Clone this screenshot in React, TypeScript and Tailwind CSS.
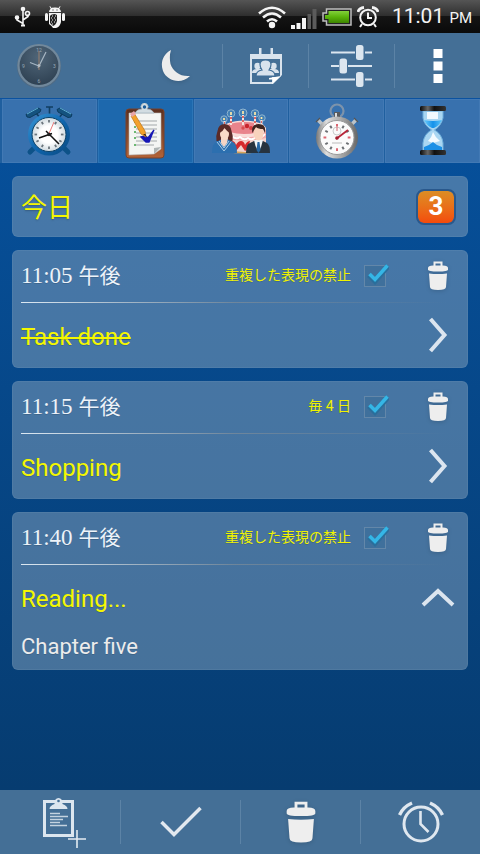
import type { ReactNode } from "react";

function UsbIcon() {
  return (
    <svg width="18" height="22" viewBox="0 0 18 22" fill="none" stroke="#f4f4f4" strokeWidth="1.6">
      <path d="M9 19V3M9 17.500L3 14V11.500M9 14l5-3.500V8.500" />
      <circle cx="9" cy="3" r="1.500" fill="#f4f4f4" />
      <circle cx="3" cy="11.500" r="1.500" fill="#f4f4f4" />
      <circle cx="13.500" cy="7.500" r="2" />
      <path d="M7 19.500h4" strokeWidth="2" />
    </svg>
  );
}

function RobotIcon() {
  return (
    <svg width="22" height="24" viewBox="0 0 22 24">
      <g fill="#f4f4f4">
        <path d="M6 1l1.500 2C9 2.300 13 2.300 14.500 3L16 1l.5.500-1.200 2.200Q17 5 17 7H5q0-2 1.700-3.300L5.500 1.500z" />
        <rect x="1" y="8" width="3" height="8" rx="1.500" />
        <rect x="18" y="8" width="3" height="8" rx="1.500" />
        <path d="M5 8h12v9q-1 5-5 6H9q-1-2-4-4z" />
      </g>
      <path d="M8.500 5h1M12.500 5h1" stroke="#222" />
      <path d="M6 11q1-2 5-2l2 1v6q-1 4-4 5l-3-3z" fill="#222" />
      <path d="M8 11h1M11 11h1M7 13h1M10 13h1M8 15h1M11 15h1M7 17h1M10 17h1M8 19h1" stroke="#eee" />
    </svg>
  );
}

function WifiIcon() {
  return (
    <svg width="28" height="24" viewBox="0 0 28 24" fill="none" stroke="#f4f4f4" strokeWidth="2.600">
      <path d="M1 8.500Q14-3 27 8.500M5 12.500q9-8 18 0M9 16.500q5-4.500 10 0" />
      <circle cx="14" cy="20" r="3.200" fill="#f4f4f4" stroke="none" />
    </svg>
  );
}

function SignalIcon() {
  return (
    <svg width="26" height="24" viewBox="0 0 26 24">
      <path d="M0 20h4v4H0zM5.500 18h4v6h-4zM11 13h4v11h-4z" fill="#f4f4f4" />
      <path d="M16.500 9h3.500v15h-3.500zM21.500 4h4v20h-4z" fill="#5b5b5b" />
    </svg>
  );
}

function BatteryIcon() {
  return (
    <svg width="30" height="18" viewBox="0 0 30 18">
      <defs>
        <linearGradient id="charge" x1="0" y1="0" x2="0" y2="1">
          <stop offset="0" stopColor="#83d13b" />
          <stop offset=".5" stopColor="#59b30a" />
          <stop offset="1" stopColor="#3d8500" />
        </linearGradient>
      </defs>
      <path d="M4.500 1h24.500v16H4.500v-4H1V5h3.500z" fill="#222" stroke="#bdbdbd" strokeWidth="1.500" />
      <path d="M6.500 3H27v12H6.500v-4H3V7h3.500z" fill="url(#charge)" />
    </svg>
  );
}

function StatusAlarmIcon() {
  return (
    <svg width="22" height="22" viewBox="0 0 22 22" fill="none" stroke="#f4f4f4" strokeWidth="2">
      <circle cx="11" cy="11.500" r="7.800" />
      <path d="M1 6q1-4 6-4.500M21 6q-1-4-6-4.500" strokeWidth="2.800" />
      <path d="M11 6.500V12h4M5 18l-2 3M17 18l2 3" />
    </svg>
  );
}

function DarkClockIcon() {
  return (
    <svg width="46" height="48" viewBox="0 0 46 48">
      <defs>
        <radialGradient id="darkface" cx=".5" cy=".3" r=".8">
          <stop offset="0" stopColor="#506679" />
          <stop offset="1" stopColor="#293b4c" />
        </radialGradient>
      </defs>
      <circle cx="23" cy="24.500" r="22" fill="#56697a" opacity=".6" />
      <circle cx="23" cy="23.500" r="20.500" fill="url(#darkface)" stroke="#71889b" strokeWidth="2.200" />
      <g fill="#9aabba" fontSize="5" textAnchor="middle" className="font-['Roboto',sans-serif]">
        <text x="23" y="10">12</text>
        <text x="38.500" y="25.500">3</text>
        <text x="23" y="41">6</text>
        <text x="7.500" y="25.500">9</text>
      </g>
      <path d="M23 24L14 20.500M22 26l8-16" stroke="#a7b6c3" strokeWidth="1.200" />
      <path d="M23 28V9" stroke="#9a806e" />
      <circle cx="23" cy="23.500" r="1.500" fill="#b4bcc2" />
    </svg>
  );
}

function MoonIcon() {
  return (
    <svg width="36" height="34" viewBox="0 0 36 34" className="drop-shadow-sm">
      <path d="M10 1C2 5-1 14 2 22c4 10 18 14 27 5C19 28 12 22 9.500 15Q8 7 10 1z" fill="#ececec" />
    </svg>
  );
}

function EventsIcon() {
  return (
    <svg width="32" height="38" viewBox="0 0 32 38">
      <g fill="#d9e3ed">
        <path d="M9 1h2.500v7H9zM20.500 1H23v7h-2.500z" />
        <path fillRule="evenodd" d="M0 7h32v21l-9 9H0zM2 12v23h20v-5h8V12z" />
        <circle cx="7.500" cy="19" r="3.200" />
        <circle cx="23.500" cy="19" r="3.200" />
        <path d="M2 26q0-4 5-4h17q5 0 5 4z" />
      </g>
      <path d="M6 29q0-5 6-6-2-3-2-5.500Q10 13 15.500 13t5.500 4.500q0 2.500-2 5.500 6 1 6 6z" fill="#d9e3ed" stroke="#416f98" strokeWidth="1.200" />
      <path d="M19 31l12-2-9 8 1-4.500h-4z" fill="#fff" />
    </svg>
  );
}

function SlidersIcon() {
  return (
    <svg width="42" height="42" viewBox="0 0 42 42">
      <path d="M0 7.500h24M34 7.500h7M0 21h8M17 21h24M0 34.500h24M34 34.500h7" stroke="#dce6ef" strokeWidth="2" />
      <g fill="#dce6ef">
        <rect x="25" y="0" width="7.500" height="15" rx="2.500" />
        <rect x="8.500" y="13.500" width="7.500" height="15" rx="2.500" />
        <rect x="25" y="27" width="7.500" height="15" rx="2.500" />
      </g>
    </svg>
  );
}

function OverflowIcon() {
  return (
    <svg width="10" height="34" viewBox="0 0 10 34" fill="#fff">
      <path d="M.5 0h9v9h-9zM.5 12.500h9v9h-9zM.5 25h9v9h-9z" />
    </svg>
  );
}

const hours = [0, 30, 60, 90, 120, 150, 180, 210, 240, 270, 300, 330];

function AlarmTabIcon() {
  return (
    <svg width="48" height="54" viewBox="0 0 48 54">
      <defs>
        <linearGradient id="bluerim" x1="0" y1="0" x2="1" y2="1">
          <stop offset="0" stopColor="#3a97d6" />
          <stop offset=".5" stopColor="#0f66ae" />
          <stop offset="1" stopColor="#0a4a82" />
        </linearGradient>
        <radialGradient id="whiteface">
          <stop offset=".5" stopColor="#fff" />
          <stop offset="1" stopColor="#cfd9df" />
        </radialGradient>
      </defs>
      <path d="M21 3h7M24.500 3v7M11 9l5 6M38 9l-5 6" stroke="#103e62" strokeWidth="1.600" />
      <path d="M2 13L1 10.500 13 4l3 1.500-1 2.500-10 5.500z" fill="#14527f" stroke="#0c3c5f" />
      <path d="M46 13l1-2.500L35 4l-3 1.500 1 2.500 10 5.500z" fill="#14527f" stroke="#0c3c5f" />
      <path d="M2 10l11-6M46 10L35 4" stroke="#5fb0d6" />
      <path d="M10 43l-5 5M38 43l5 5" stroke="#0d5288" strokeWidth="5" strokeLinecap="round" />
      <circle cx="24" cy="30.500" r="21" fill="url(#bluerim)" />
      <circle cx="24" cy="30.500" r="17" fill="url(#whiteface)" stroke="#0a4167" />
      {hours.map((angle) => (
        <path key={angle} d="M24 16v2.600" stroke="#6b757c" strokeWidth="1.800" transform={`rotate(${angle} 24 30.500)`} />
      ))}
      <path d="M23 32l6-14" stroke="#e87979" />
      <path d="M14 34l13-4.500M21 27l13 13" stroke="#111" strokeWidth="1.500" />
      <circle cx="24" cy="30.500" r="1.800" fill="#222" />
    </svg>
  );
}

function TasksTabIcon() {
  return (
    <svg width="40" height="56" viewBox="0 0 40 56">
      <defs>
        <linearGradient id="board" x1="0" y1="0" x2="0" y2="1">
          <stop offset="0" stopColor="#5b3020" />
          <stop offset="1" stopColor="#b26337" />
        </linearGradient>
      </defs>
      <rect x="1" y="6" width="38" height="49" rx="3" fill="url(#board)" stroke="#79412b" />
      <path d="M4 10h32v36l-7 5-25 1z" fill="#f4f5f3" stroke="#bbb" strokeWidth=".6" />
      <path d="M36 44l-7 7v-6z" fill="#aeb4b4" />
      <path d="M11 18h21M11 22h21M11 26h21M11 30h21M11 34h21M11 38h21M11 42h18" stroke="#a3a8aa" />
      <path d="M10 18v2M10 23v2M10 28v2M10 34v2M10 41v2" stroke="#6bb872" strokeWidth="2" />
      <path d="M10 10q2-4 7-4a3.500 3.500 0 1 1 5 0q5 0 7 4z" fill="#d3dde2" stroke="#9fb0bb" strokeWidth=".7" />
      <circle cx="19.500" cy="4" r="1.700" fill="#1c5c98" />
      <path d="M16 34l4-1 3 2 6-8-1 2-4 10-3 0z" fill="#1717b5" stroke="#1717b5" strokeWidth="1.300" />
      <path d="M6 13l3-3 11 18 1 6-5-3z" fill="#f3a12b" stroke="#c47b1f" strokeWidth=".8" />
      <path d="M5 11l4-3 2 3-4 3z" fill="#e8a5a9" />
      <path d="M18 31l3.500 3-1-3z" fill="#3b2a18" />
    </svg>
  );
}

function BirthdayTabIcon() {
  return (
    <svg width="58" height="46" viewBox="0 0 58 46">
      <ellipse cx="31" cy="41" rx="21" ry="4.500" fill="#d7a458" />
      <path d="M11 20v21q21 6 43 0V20z" fill="#f3d3cd" />
      <path d="M11 21v9q21 5 43 0v-9z" fill="#f2a9ab" />
      <ellipse cx="32" cy="21" rx="22" ry="8.500" fill="#f9dcd9" />
      <ellipse cx="32" cy="20" rx="19" ry="6" fill="#e9848c" />
      <path d="M12 27q4 4 8 1 4 4 8 1 4 4 8 1 4 3 8-1 5 2 9-3" fill="none" stroke="#fff" strokeWidth="1.800" />
      <path d="M20 33q3 0 4 4 2-4 5-4t4 4q2-4 5-4-2 9-5 10l-4-6-5 6q-3-2-4-10z" fill="#d5292c" />
      <circle cx="35" cy="18" r="2.200" fill="#c9252d" />
      <circle cx="39" cy="20" r="2" fill="#d83b3f" />
      <circle cx="31" cy="20" r="1.700" fill="#da4c50" />
      <g fill="#4380b4" stroke="#90b5d0" strokeWidth="1">
        <circle cx="12" cy="11" r="3.200" />
        <circle cx="19" cy="5.500" r="3.800" />
        <circle cx="31" cy="5" r="4" />
        <circle cx="43" cy="5.500" r="3.800" />
        <circle cx="50" cy="10" r="3.200" />
      </g>
      <path d="M12.500 13v6M19 8v9M31 7v10M43 8v9M49.500 12v6" stroke="#f3e4df" strokeWidth="2" />
      <path d="M12 15h1M18 10h2M18 14h2M30 9h2M30 13h2M42 10h2M42 14h2M49 14h1" stroke="#d33d3d" strokeWidth="1.500" />
      <path d="M12 10v2M19 4v3M31 3v3M43 4v3M49.500 9v2" stroke="#ffe9a8" strokeWidth="1.700" />
      <path d="M4.500 33q-1-5 1-10 1-7 7-7t7 7q2 5 1 10z" fill="#5b2b28" />
      <path d="M0 45q0-9 4-11l6-3h5l6 3q4 2 4 11z" fill="#2c6faf" />
      <path d="M9 30h7l-1 5-3 4-3-4z" fill="#f5d5c5" />
      <path d="M5 34l7 9 7-9M7 33l5 7 5-7" fill="none" stroke="#a9cbe6" />
      <ellipse cx="12.500" cy="26" rx="4.500" ry="6" fill="#f9dac9" />
      <path d="M7.500 25q3-1 5-5 2 3 5.500 5 0-7-5.500-7t-5 7z" fill="#5b2b28" />
      <path d="M34 45q0-9 4-10l6-3h5l6 3q3 2 3 10z" fill="#27333f" />
      <path d="M42 32h9l-2 7-2.500 5-3-6z" fill="#eef3f6" />
      <path d="M45.500 34h2l1 8-2 3-2-3z" fill="#2466a5" />
      <ellipse cx="46.500" cy="25.500" rx="5" ry="7" fill="#f8d3bd" />
      <path d="M40.500 25q-2-8 6-9 8 0 6.500 9l-2-4q-5 0-7-2l-2 3z" fill="#3d241f" />
    </svg>
  );
}

function StopwatchTabIcon() {
  return (
    <svg width="44" height="56" viewBox="0 0 44 56">
      <defs>
        <linearGradient id="steel">
          <stop offset="0" stopColor="#777" />
          <stop offset=".25" stopColor="#ddd" />
          <stop offset=".7" stopColor="#999" />
          <stop offset="1" stopColor="#666" />
        </linearGradient>
      </defs>
      <circle cx="22" cy="8" r="6.500" fill="none" stroke="#7d93ab" strokeWidth="2.200" />
      <path d="M19 9h6v8h-6z" fill="#595b5e" />
      <path d="M20 10h2v7h-2z" fill="#ddd" />
      <path d="M3 17l6 6M41 17l-6 6" stroke="#bcc3c9" strokeWidth="3.500" />
      <path d="M1 19l4-4M39 15l4 4" stroke="#555" strokeWidth="1.200" />
      <circle cx="22" cy="34.500" r="21" fill="url(#steel)" />
      <circle cx="22" cy="34.500" r="17" fill="#fbfbfb" stroke="#999" />
      {hours.map((angle) => (
        <path key={angle} d="M22 21v2.800" stroke={angle % 90 === 0 ? "#dc6571" : "#6b6e72"} strokeWidth="2" transform={`rotate(${angle} 22 34.500)`} />
      ))}
      <circle cx="22" cy="28" r="4" fill="none" stroke="#ccc" />
      <path d="M22 24v4" stroke="#d26871" />
      <path d="M17 40h10" stroke="#bbb" />
      <path d="M21 36l12-9" stroke="#b72639" strokeWidth="1.800" />
      <circle cx="22" cy="35" r="1.800" fill="#a32132" />
    </svg>
  );
}

function HourglassTabIcon() {
  return (
    <svg width="28" height="50" viewBox="0 0 28 50">
      <defs>
        <linearGradient id="water">
          <stop offset="0" stopColor="#6ccbfa" />
          <stop offset=".5" stopColor="#1591ea" />
          <stop offset="1" stopColor="#5cc5fb" />
        </linearGradient>
        <linearGradient id="cap">
          <stop offset="0" stopColor="#080808" />
          <stop offset=".3" stopColor="#666" />
          <stop offset=".55" stopColor="#111" />
          <stop offset="1" stopColor="#333" />
        </linearGradient>
      </defs>
      <path d="M4 5h20v7q-2 8-8.500 12Q23 28 24 37v8H4v-8q1-9 8.500-13Q5 19 4 12z" fill="#a9d6f2" stroke="#6fb0dd" />
      <path d="M8 6h11v7H8zM9 35q4-4 5-9 2 5 7 9l-7 2z" fill="#f2faff" />
      <path d="M5 14q9 2 18 0-2 5-8 8h-2q-6-3-8-8z" fill="url(#water)" />
      <path d="M5 44v-3q6-2 9-5 4 4 9 5v3z" fill="#1a8fe6" />
      <rect x="1" y="0" width="26" height="5" rx="1.500" fill="url(#cap)" />
      <rect x="1" y="44" width="26" height="5" rx="1.500" fill="url(#cap)" />
    </svg>
  );
}

function TrashIcon({ large = false }: { large?: boolean }) {
  return (
    <svg viewBox="0 0 22 30" className={large ? "h-[43px] w-8 drop-shadow-sm" : "h-[30px] w-[22px] drop-shadow-sm"}>
      <path d="M7.500 6V1.500h7V6" fill="none" stroke="#eee" strokeWidth="2" />
      <path d="M1 7q0-2.500 5-2.500h10q5 0 5 2.500v1.500q0 2-10 2T1 8.500z" fill="#eee" />
      <path d="M2 12.500q9 1 18 0L19 26q0 3-8 3t-8-3z" fill="#eee" />
    </svg>
  );
}

function ChevronIcon({ open }: { open: boolean }) {
  return open ? (
    <svg width="34" height="20" viewBox="0 0 34 20">
      <path d="M2 18L17 4l15 14" fill="none" stroke="#dce5ef" strokeWidth="4" />
    </svg>
  ) : (
    <svg width="20" height="36" viewBox="0 0 20 36">
      <path d="M2.500 2L16.500 18l-14 16" fill="none" stroke="#dce5ef" strokeWidth="4" />
    </svg>
  );
}

function AddTaskIcon() {
  return (
    <svg width="54" height="52" viewBox="-10 0 54 52" fill="none">
      <rect x="1.500" y="5.500" width="28" height="34" stroke="#dce6ef" strokeWidth="3" />
      <path d="M6.500 13q0-3 5-5 0-6 4-6t4 6q5 2 5 5z" fill="#dce6ef" />
      <circle cx="15.500" cy="5" r="1.300" fill="#446f97" />
      <path d="M7 17.500h10M7 20.500h18M7 23.500h13M7 26.500h10M7 29.500h17" stroke="#c4d3e0" strokeWidth="1.600" />
      <path d="M25 43h18M34 34v18" stroke="#e3ebf2" strokeWidth="1.600" />
    </svg>
  );
}

function DoneIcon() {
  return (
    <svg width="42" height="32" viewBox="0 0 42 32" fill="none">
      <path d="M1.500 16L14 28.500 40.500 2" stroke="#e2e8ef" strokeWidth="3.500" />
    </svg>
  );
}

function AlarmOutlineIcon() {
  return (
    <svg width="46" height="42" viewBox="0 0 46 42" fill="none" stroke="#dfe7ef">
      <circle cx="23" cy="23" r="17" strokeWidth="3" />
      <path d="M1.500 14Q5 6 14 2M44.500 14Q41 6 32 2" strokeWidth="3.400" />
      <path d="M22.500 10v13l8 8" strokeWidth="2.600" />
    </svg>
  );
}

const tabs: { name: string; icon: ReactNode }[] = [
  { name: "Alarms", icon: <AlarmTabIcon /> },
  { name: "Tasks", icon: <TasksTabIcon /> },
  { name: "Birthdays", icon: <BirthdayTabIcon /> },
  { name: "Stopwatch", icon: <StopwatchTabIcon /> },
  { name: "Timer", icon: <HourglassTabIcon /> },
];

const actions: { name: string; icon: ReactNode }[] = [
  { name: "Night mode", icon: <MoonIcon /> },
  { name: "Events", icon: <EventsIcon /> },
  { name: "Settings", icon: <SlidersIcon /> },
  { name: "More", icon: <OverflowIcon /> },
];

const tools: { name: string; icon: ReactNode }[] = [
  { name: "Add task", icon: <AddTaskIcon /> },
  { name: "Complete", icon: <DoneIcon /> },
  { name: "Delete", icon: <TrashIcon large /> },
  { name: "Set alarm", icon: <AlarmOutlineIcon /> },
];

type Task = { time: string; repeat: string; title: string; done?: boolean; note?: string };

const tasks: Task[] = [
  { time: "11:05", repeat: "重複した表現の禁止", title: "Task done", done: true },
  { time: "11:15", repeat: "毎 4 日", title: "Shopping" },
  { time: "11:40", repeat: "重複した表現の禁止", title: "Reading...", note: "Chapter five" },
];

function TaskCard({ task }: { task: Task }) {
  return (
    <article className="rounded-md border border-white/5 bg-[#7b9ab8]/55 pl-2 text-shadow-2xs">
      <div className="flex h-[51px] items-center pb-0.5">
        <time className="flex flex-1 items-baseline gap-1.5 text-[#edf3f9]">
          <span className="font-['Liberation_Serif',serif] text-[23px] leading-8">{task.time}</span>
          <span className="text-[21px] leading-8">午後</span>
        </time>
        <label className="flex items-center gap-2.5 text-[14px] text-[#f0f300]">
          <span>{task.repeat}</span>
          <span className="grid h-7 w-7 place-items-center">
            <input
              type="checkbox"
              defaultChecked
              className="peer col-start-1 row-start-1 h-[22px] w-[22px] appearance-none border border-[#6387a9] bg-[#3f709c]"
            />
            <svg width="28" height="28" viewBox="0 0 28 28" className="pointer-events-none col-start-1 row-start-1 hidden peer-checked:block">
              <path d="M8 13l6 6L27 4" fill="none" stroke="#2a6f9c" strokeWidth="5.500" />
              <path d="M8.500 12l5.500 5.500L26.500 3.500" fill="none" stroke="#35b6e6" strokeWidth="3.600" />
            </svg>
          </span>
        </label>
        <button type="button" aria-label="Delete task" className="ml-5 flex h-12 w-[58px] items-center justify-center">
          <TrashIcon />
        </button>
      </div>
      <div className="mr-5 h-px bg-linear-to-r from-[#dce8f2] via-[#7f8d99]/70 via-50% to-transparent" />
      <div className="flex h-16 items-center">
        <h2 className={task.done ? "flex-1 pt-1 text-[24px] text-[#f4f700] line-through decoration-2" : "flex-1 pt-1 text-[24px] text-[#f4f700]"}>
          {task.title}
        </h2>
        <button type="button" aria-label="Show details" aria-expanded={Boolean(task.note)} className="flex h-14 w-[58px] items-center justify-center">
          <ChevronIcon open={Boolean(task.note)} />
        </button>
      </div>
      {task.note && <p className="h-10 text-[22px] leading-9 text-[#ececec]">{task.note}</p>}
    </article>
  );
}

export default function App() {
  return (
    <div className="flex min-h-screen flex-col bg-linear-to-b from-[#0654a4] to-[#063a6c] font-['Roboto','Noto_Sans_CJK_JP',sans-serif]">
      <header>
        <div className="flex h-[33px] items-center bg-[linear-gradient(#555,#2e2e2e_48%,#141414_50%,#0a0a0a)] px-2 text-[#f4f4f4]">
          <div className="flex flex-1 items-center gap-3 pl-1.5">
            <UsbIcon />
            <RobotIcon />
          </div>
          <div className="flex items-center gap-[5px]">
            <WifiIcon />
            <SignalIcon />
            <BatteryIcon />
            <StatusAlarmIcon />
            <time className="pl-2 text-[21px]">
              11:01 <span className="text-[15px]">PM</span>
            </time>
          </div>
        </div>
        <div className="flex h-[65px] items-center bg-[#446f96]">
          <div className="flex-1 pl-4">
            <DarkClockIcon />
          </div>
          <nav aria-label="Actions" className="flex">
            {actions.map((action) => (
              <button key={action.name} type="button" aria-label={action.name} className="flex h-11 w-[86px] items-center justify-center border-[#5c83a6] not-first:border-l">
                {action.icon}
              </button>
            ))}
          </nav>
        </div>
        <nav aria-label="Sections" className="grid h-[65px] grid-cols-5 gap-px border-t border-[#0b52a0] bg-[#1f5f9f] pl-0.5">
          {tabs.map((tab) => (
            <button
              key={tab.name}
              type="button"
              aria-label={tab.name}
              aria-current={tab.name === "Tasks" ? "page" : undefined}
              className={
                tab.name === "Tasks"
                  ? "flex items-center justify-center border border-[#2b75b7] bg-[#1d68ad]"
                  : "flex items-center justify-center border border-[#4279b4] bg-[#3871ae]"
              }
            >
              {tab.icon}
            </button>
          ))}
        </nav>
      </header>
      <main className="flex flex-1 flex-col gap-[13px] px-3 py-[13px]">
        <section className="flex h-[61px] items-center justify-between rounded-md border border-white/5 bg-[#7b9ab8]/55 pr-[11px] pl-2">
          <h1 className="pt-1 text-[26px] text-[#f4f700] text-shadow-sm">今日</h1>
          <span className="flex h-9 w-10 items-center justify-center rounded-lg border-2 border-[#29588c] bg-linear-to-b from-[#dc8d24] to-[#f34a0c] bg-clip-padding text-[26px] font-bold text-white">
            3
          </span>
        </section>
        {tasks.map((task) => (
          <TaskCard key={task.time} task={task} />
        ))}
      </main>
      <footer className="grid h-16 grid-cols-4 items-center bg-[#446f96]">
        {tools.map((tool) => (
          <button key={tool.name} type="button" aria-label={tool.name} className="flex h-11 items-center justify-center border-[#5c83a6] not-first:border-l">
            {tool.icon}
          </button>
        ))}
      </footer>
    </div>
  );
}
